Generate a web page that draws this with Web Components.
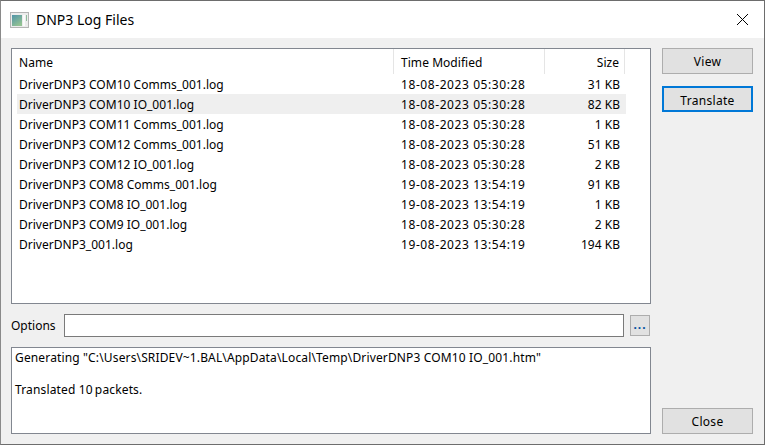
<!DOCTYPE html>
<html>
<head>
<meta charset="utf-8">
<title>DNP3 Log Files</title>
<style>
  html, body { margin: 0; padding: 0; background: #f0f0f0; }
  body { font: 12px "Noto Sans", "Open Sans", sans-serif; color: #000; }
  .side { display: flex; flex-direction: column; height: 100%; }
  .side dlg-button:last-child { margin-top: auto; }
  .main { display: flex; flex-direction: column; }
</style>
</head>
<body>
<dlg-window heading="DNP3 Log Files">
  <div class="main">
    <log-table></log-table>
    <options-row></options-row>
    <output-box>
      <div>Generating "C:\Users\SRIDEV~1.BAL\AppData\Local\Temp\DriverDNP3 COM10 IO_001.htm"</div>
      <div>&nbsp;</div>
      <div>Translated 10&#8201;packets.</div>
    </output-box>
  </div>
  <div class="side" slot="side">
    <dlg-button>View</dlg-button>
    <dlg-button focused>Translate</dlg-button>
    <dlg-button>Close</dlg-button>
  </div>
</dlg-window>

<script>
class DlgWindow extends HTMLElement {
  constructor() {
    super();
    this.attachShadow({mode: 'open'});
  }

  connectedCallback() {
    this.shadowRoot.innerHTML = `
      <style>
        :host {
          display: flex;
          flex-direction: column;
          box-sizing: border-box;
          width: 765px;
          height: 445px;
          border: 1px solid #6d6d6d;
          border-left-color: #8a8a8a;
          background: #f0f0f0;
        }
        .title {
          flex: none;
          display: flex;
          align-items: center;
          height: 37px;
          background: #fff;
          padding-left: 9px;
        }
        .title svg { flex: none; }
        .title span { margin-left: 7px; font-size: 14px; color: #000; }
        .close { margin-left: auto; margin-right: 15px; display: block; }
        .body {
          flex: 1;
          display: grid;
          grid-template-columns: 640px 91px;
          column-gap: 11px;
          padding: 10px 0 10px 10px;
          min-height: 0;
        }
      </style>
      <div class="title">
        <svg width="19" height="16" viewBox="0 0 19 16">
          <defs>
            <linearGradient id="pane" x1="0" y1="0" x2="0.6" y2="1">
              <stop offset="0" stop-color="#4f93a8"/>
              <stop offset="1" stop-color="#93c293"/>
            </linearGradient>
          </defs>
          <rect x="0.5" y="0.5" width="18" height="15" fill="#ececec" stroke="#b4b4b4"/>
          <rect x="2" y="3" width="10" height="11" fill="url(#pane)"/>
          <rect x="13" y="3" width="2" height="11" fill="#fbfbfb"/>
          <rect x="16" y="3" width="1" height="6" fill="#8fbb9b"/>
        </svg>
        <span>${this.getAttribute('heading')}</span>
        <svg class="close" width="13" height="13" viewBox="0 0 13 13">
          <path d="M1 1L12 12M12 1L1 12" stroke="#000" stroke-width="1" fill="none"/>
        </svg>
      </div>
      <div class="body">
        <slot></slot>
        <slot name="side"></slot>
      </div>
    `;
  }
}

class DlgButton extends HTMLElement {
  constructor() {
    super();
    this.attachShadow({mode: 'open'});
    this.shadowRoot.innerHTML = `
      <style>
        :host {
          display: flex;
          align-items: center;
          justify-content: center;
          box-sizing: border-box;
          height: 26px;
          margin-bottom: 12px;
          padding-top: 1px;
          background: #e1e1e1;
          border: 1px solid #adadad;
          font-size: 12px;
          letter-spacing: 0.3px;
        }
        :host([focused]) { border: 2px solid #0078d7; padding-top: 2px; }
        :host(:last-child) { margin-bottom: 0; }
      </style>
      <slot></slot>
    `;
  }
}

class LogTable extends HTMLElement {
  constructor() {
    super();
    this.attachShadow({mode: 'open'});
  }

  get data() {
    return [
      ['DriverDNP3 COM10 Comms_001.log', '18-08-2023 05:30:28', '31 KB'],
      ['DriverDNP3 COM10 IO_001.log', '18-08-2023 05:30:28', '82 KB'],
      ['DriverDNP3 COM11 Comms_001.log', '18-08-2023 05:30:28', '1 KB'],
      ['DriverDNP3 COM12 Comms_001.log', '18-08-2023 05:30:28', '51 KB'],
      ['DriverDNP3 COM12 IO_001.log', '18-08-2023 05:30:28', '2 KB'],
      ['DriverDNP3 COM8 Comms_001.log', '19-08-2023 13:54:19', '91 KB'],
      ['DriverDNP3 COM8 IO_001.log', '19-08-2023 13:54:19', '1 KB'],
      ['DriverDNP3 COM9 IO_001.log', '18-08-2023 05:30:28', '2 KB'],
      ['DriverDNP3_001.log', '19-08-2023 13:54:19', '194 KB'],
    ];
  }

  connectedCallback() {
    this.render();
  }

  render() {
    this.shadowRoot.innerHTML = `
      <style>
        :host {
          display: block;
          box-sizing: border-box;
          height: 256px;
          background: #fff;
          border: 1px solid #828790;
          padding-left: 5px;
        }
        .row {
          display: grid;
          grid-template-columns: 377px 151px 80px;
          width: 609px;
          height: 20px;
          line-height: 20px;
        }
        .row span { padding: 1px 0 0 2px; white-space: nowrap; height: 19px; letter-spacing: 0.02px; }
        .row span:nth-child(2) { padding-left: 7px; letter-spacing: 0.58px; }
        .row span:last-child { text-align: right; padding-right: 5px; }
        .head { height: 25px; line-height: 25px; }
        .head span { border-right: 1px solid #e5e5e5; height: 24px; }
        .head span:nth-child(2) { letter-spacing: 0.05px; }
        .sel { background: #efefef; }
      </style>
      <div class="row head"><span>Name</span><span>Time Modified</span><span>Size</span></div>
      ${this.data.map((r, i) => `
        <div class="row ${i === 1 ? 'sel' : ''}"><span>${r[0]}</span><span>${r[1]}</span><span>${r[2]}</span></div>
      `).join('')}
    `;
  }
}

class OptionsRow extends HTMLElement {
  constructor() {
    super();
    this.attachShadow({mode: 'open'});
    this.shadowRoot.innerHTML = `
      <style>
        :host {
          display: flex;
          align-items: center;
          height: 23px;
          margin: 10px 0;
        }
        label { width: 53px; flex: none; }
        .input {
          box-sizing: border-box;
          width: 560px;
          height: 23px;
          background: #fff;
          border: 1px solid #7a7a7a;
        }
        .more {
          box-sizing: border-box;
          display: flex;
          align-items: center;
          justify-content: center;
          width: 20px;
          height: 21px;
          margin-left: 6px;
          padding-bottom: 2px;
          background: #e1e1e1;
          border: 1px solid #adadad;
          color: #0050a0;
          font-weight: 700;
          letter-spacing: 1px;
          line-height: 15px;
        }
      </style>
      <label>Options</label>
      <div class="input"></div>
      <div class="more">...</div>
    `;
  }
}

class OutputBox extends HTMLElement {
  constructor() {
    super();
    this.attachShadow({mode: 'open'});
    this.shadowRoot.innerHTML = `
      <style>
        :host {
          display: block;
          box-sizing: border-box;
          height: 87px;
          background: #fff;
          border: 1px solid #828790;
          padding: 2px 3px;
          line-height: 16px;
          white-space: nowrap;
          letter-spacing: 0.145px;
        }
      </style>
      <slot></slot>
    `;
  }
}

customElements.define('dlg-window', DlgWindow);
customElements.define('dlg-button', DlgButton);
customElements.define('log-table', LogTable);
customElements.define('options-row', OptionsRow);
customElements.define('output-box', OutputBox);
</script>
</body>
</html>
